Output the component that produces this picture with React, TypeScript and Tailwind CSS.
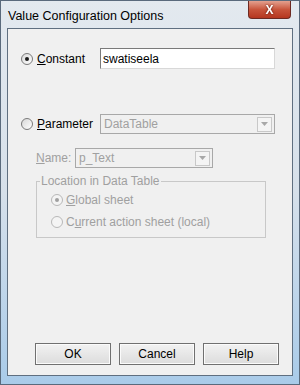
const ui = { fontFamily: '"Liberation Sans", "DejaVu Sans", sans-serif' };

function Radio({ checked, disabled }: { checked?: boolean; disabled?: boolean }) {
  return (
    <span
      className={
        "w-[12px] h-[12px] rounded-full border flex items-center justify-center shrink-0 " +
        (disabled
          ? "border-[#b8b8b8] bg-[#f4f4f4]"
          : "border-[#7a7a7a] bg-gradient-to-br from-[#d8d8d8] to-white")
      }
    >
      {checked && (
        <span
          className={
            "w-[4px] h-[4px] rounded-full " + (disabled ? "bg-[#a0a0a0]" : "bg-[#1a1a1a]")
          }
        />
      )}
    </span>
  );
}

function Combo({ value, width }: { value: string; width: string }) {
  return (
    <div
      className={
        width +
        " h-[20px] border border-[#a8a8a8] bg-[#f0f0f0] flex items-center justify-between pl-[3px] pr-[2px]"
      }
    >
      <span className="text-[12px] text-[#a0a0a0] leading-none">{value}</span>
      <span className="w-[15px] h-[15px] border border-[#c8c8c8] bg-[#f4f4f4] flex items-center justify-center">
        <svg width="7" height="4" viewBox="0 0 7 4">
          <path d="M0 0h7L3.5 4z" fill="#a8a8a8" />
        </svg>
      </span>
    </div>
  );
}

function Button({ label }: { label: string }) {
  return (
    <button className="w-[76px] h-[22px] border border-[#707070] bg-gradient-to-b from-[#f2f2f2] to-[#dcdcdc] text-[12px] text-black shadow-[inset_0_0_0_1px_#fbfbfb]">
      {label}
    </button>
  );
}

export default function App() {
  return (
    <div
      className="w-[300px] h-[385px] flex flex-col bg-gradient-to-b from-[#e3e9ef] via-[#d6e0ea] to-[#a9cbe9] border border-[#5a6a7c]"
      style={ui}
    >
      {/* title bar */}
      <div className="h-[27px] flex items-start justify-between pl-[7px] pr-[8px]">
        <span className="mt-[6px] text-[12.5px] text-black">Value Configuration Options</span>
        <div className="w-[43px] h-[18px] rounded-b-[4px] border border-[#6d2a22] border-t-0 bg-gradient-to-b from-[#e3a08f] via-[#c8553c] to-[#b5361f] flex items-center justify-center">
          <span className="text-white text-[12px] font-bold leading-none drop-shadow-[0_0_1px_#5a1208]">
            X
          </span>
        </div>
      </div>

      {/* client area */}
      <div className="mx-[6px] flex-1 border border-[#5f6f80] bg-[#f0f0f0] flex flex-col text-[12px] text-black">
        <div className="mt-[19px] flex items-center pl-[13px] pr-[17px]">
          <Radio checked />
          <span className="ml-[4px] w-[63px]">
            <u>C</u>onstant
          </span>
          <div className="flex-1 h-[21px] border border-[#7a7a7a] border-r-[#d8d8d8] border-b-[#d8d8d8] bg-white flex items-center pl-[2px]">
            swatiseela
          </div>
        </div>

        <div className="mt-[45px] flex items-center pl-[13px] pr-[17px]">
          <Radio />
          <span className="ml-[4px] w-[63px]">
            <u>P</u>arameter
          </span>
          <Combo value="DataTable" width="flex-1" />
        </div>

        <div className="mt-[14px] flex items-center pl-[28px]">
          <span className="w-[39px] text-[#a0a0a0]">
            <u>N</u>ame:
          </span>
          <Combo value="p_Text" width="w-[138px]" />
        </div>

        <div className="relative mt-[13px] ml-[28px] mr-[26px] h-[57px] border border-[#c8c8c8]">
          <span className="absolute -top-[8px] left-[3px] px-[1px] leading-[14px] bg-[#f0f0f0] text-[#a0a0a0]">
            Location in Data Table
          </span>
          <div className="mt-[9px] ml-[14px] flex items-center gap-[3px] text-[#a0a0a0]">
            <Radio checked disabled />
            <span>
              <u>G</u>lobal sheet
            </span>
          </div>
          <div className="mt-[4px] ml-[14px] flex items-center gap-[3px] text-[#a0a0a0]">
            <Radio disabled />
            <span>
              C<u>u</u>rrent action sheet (local)
            </span>
          </div>
        </div>

        <div className="mt-auto mb-[10px] flex gap-[8px] pl-[27px]">
          <Button label="OK" />
          <Button label="Cancel" />
          <Button label="Help" />
        </div>
      </div>
      <div className="h-[8px]" />
    </div>
  );
}
